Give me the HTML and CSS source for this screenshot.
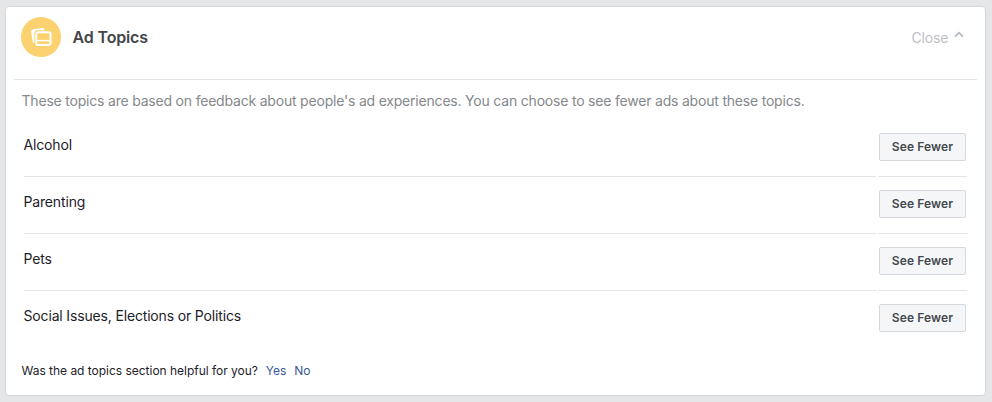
FILE: index.html
```html
<!DOCTYPE html>
<html lang="en">
<head>
<meta charset="utf-8">
<title>Ad Topics</title>
<link rel="stylesheet" href="styles.css">
</head>
<body>
    <div class="card">
        <div class="header">
            <svg class="icon" width="40" height="40" viewBox="0 0 40 40">
                <circle cx="20" cy="20" r="20" fill="#fcd16f"/>
                <path d="M12.2 12.2 L21.5 11 Q23.4 10.9 23.7 13.2 L16.8 13.2 Q13.4 13.2 13.4 16.6 L13.4 26 Q12 26 11.6 24.3 L10.1 14.8 Q9.9 12.5 12.2 12.2 Z" fill="#fff"/>
                <rect x="15.3" y="15.3" width="14.2" height="12.8" rx="2" fill="none" stroke="#fff" stroke-width="2"/>
                <path d="M15.3 23.6 H29.5" stroke="#fff" stroke-width="1.4"/>
            </svg>
            <h1>Ad Topics</h1>
            <a class="close" href="#">Close
                <svg width="10" height="7" viewBox="0 0 10 7"><path d="M1 5.7 L5 1.7 L9 5.7" fill="none" stroke="#b4b7c2" stroke-width="1.8"/></svg>
            </a>
        </div>
        <p class="intro">These topics are based on feedback about people's ad experiences. You can choose to see fewer ads about these topics.</p>
        <table class="topics">
            <tr>
                <td>Alcohol</td>
                <td class="action"><button type="button">See Fewer</button></td>
            </tr>
            <tr>
                <td>Parenting</td>
                <td class="action"><button type="button">See Fewer</button></td>
            </tr>
            <tr>
                <td>Pets</td>
                <td class="action"><button type="button">See Fewer</button></td>
            </tr>
            <tr>
                <td>Social Issues, Elections or Politics</td>
                <td class="action"><button type="button">See Fewer</button></td>
            </tr>
        </table>
        <p class="feedback">Was the ad topics section helpful for you? <a href="#">Yes</a> <a href="#">No</a></p>
    </div>
</body>
</html>
```
FILE: styles.css
```css
* {
    box-sizing: border-box;
}
body {
    margin: 0;
    padding: 6px 6px 6px 5px;
    background-color: #e5e6e8;
    font-family: Inter, sans-serif;
    color: #1d2129;
}
a {
    color: #385898;
    text-decoration: none;
}
.card {
    width: 981px;
    height: 390px;
    padding: 0 8px;
    background-color: #fff;
    border: 1px solid #d3d6da;
    border-radius: 4px;
}
.header {
    display: flex;
    height: 73px;
    padding: 10px 13px 0 7px;
    border-bottom: 1px solid #e5e5e5;
}
.icon {
    flex: none;
}
h1 {
    margin: 0 0 0 11.5px;
    font-size: 16px;
    line-height: 40px;
    font-weight: 600;
    letter-spacing: -0.15px;
    color: #444549;
}
.close {
    margin-left: auto;
    font-size: 14px;
    line-height: 41px;
    letter-spacing: -0.15px;
    color: #bec0c4;
}
.close svg {
    margin-left: 2px;
    vertical-align: 5px;
}
.intro {
    margin: 11px 0 9px 7.5px;
    font-size: 14px;
    line-height: 20px;
    letter-spacing: -0.2px;
    color: #85888c;
}
.topics {
    width: 947px;
    margin-left: 8px;
    border-spacing: 2px;
    font-size: 14px;
    letter-spacing: -0.16px;
}
.topics td {
    height: 55px;
    padding: 13px 0 0;
    line-height: 20px;
    vertical-align: top;
    text-indent: -0.5px;
    border-bottom: 1px solid #e5e5e5;
}
.topics td.action {
    width: 89px;
    padding: 11px 1px 0;
}
.topics tr:last-child td {
    border-bottom: none;
}
button {
    display: block;
    width: 87px;
    height: 28px;
    padding: 0;
    font: 600 12px/26px Inter, sans-serif;
    letter-spacing: 0.12px;
    color: #444950;
    background-color: #f5f6f7;
    border: 1px solid #d5d8dd;
    border-radius: 2px;
}
.feedback {
    margin: 13px 0 0 7.5px;
    font-size: 12px;
    line-height: 16px;
    letter-spacing: -0.02px;
}
.feedback a {
    margin-left: 4.5px;
}
```
